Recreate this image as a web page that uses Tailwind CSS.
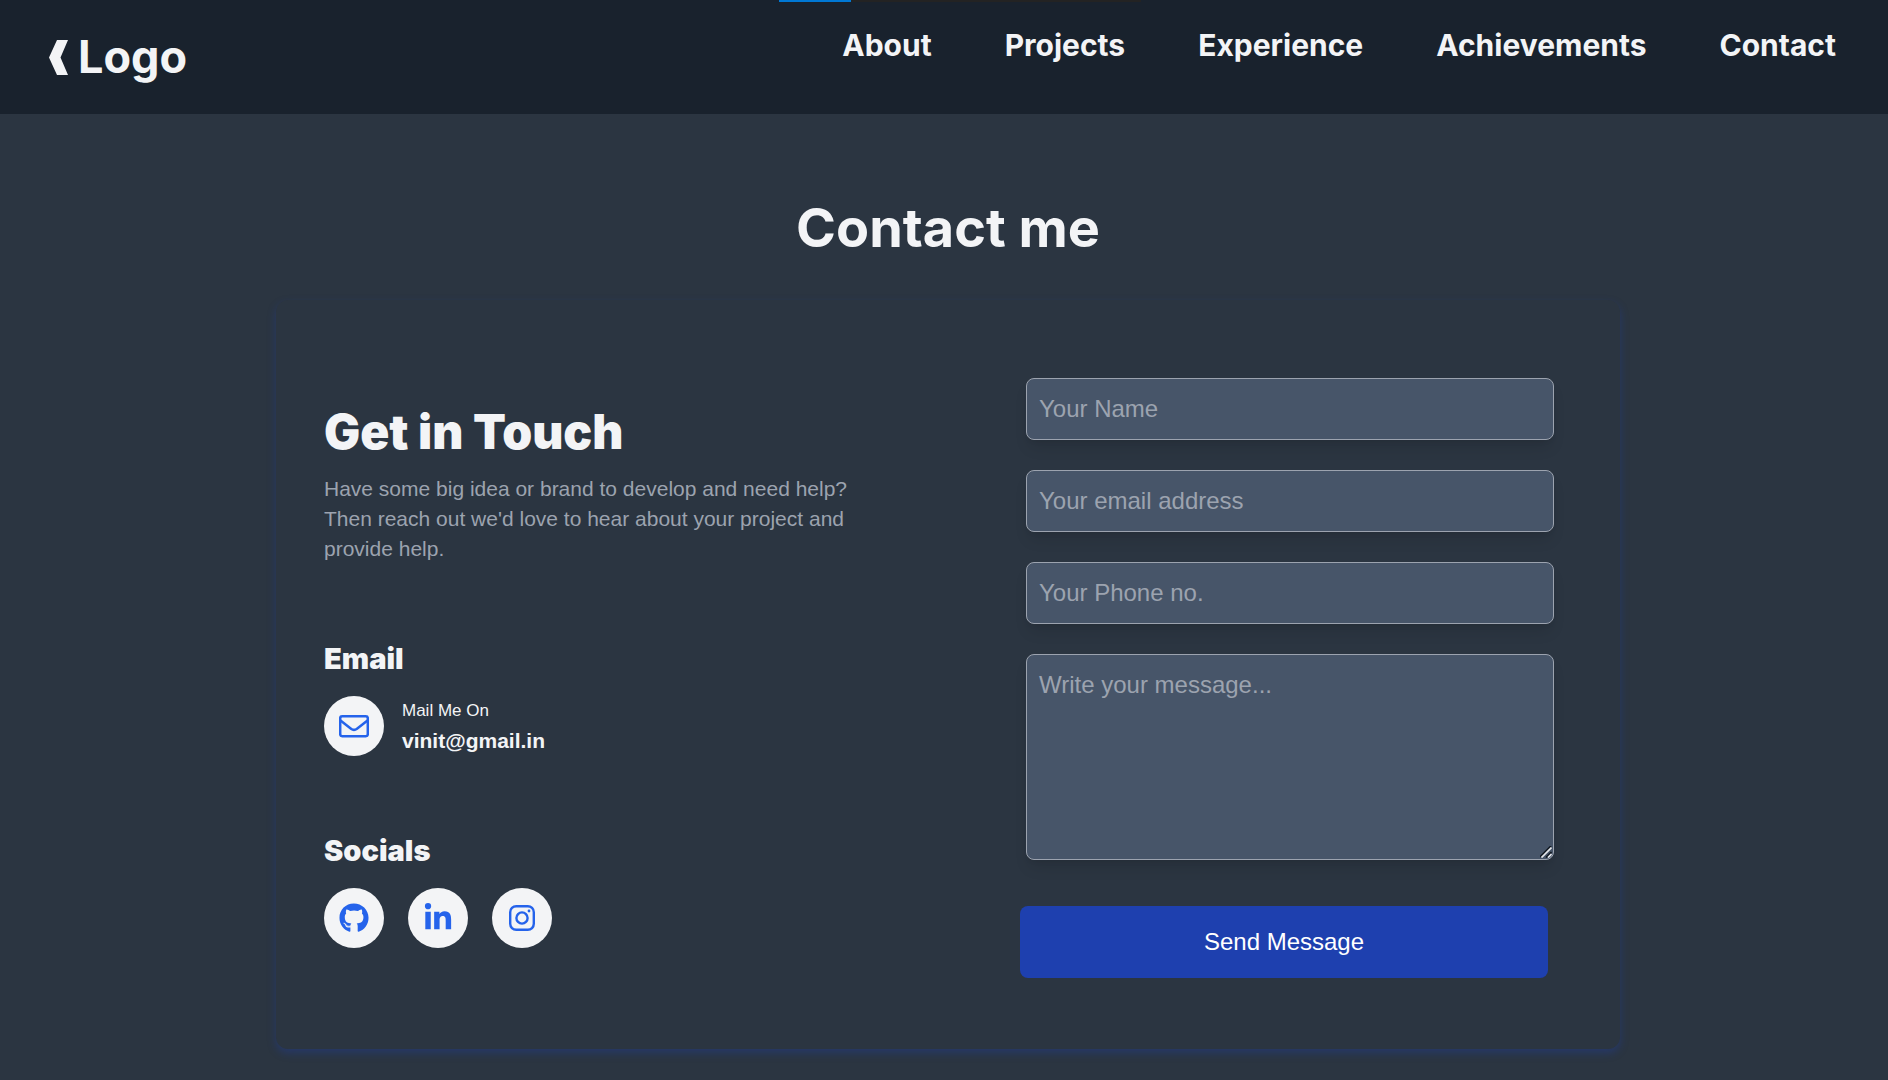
<!DOCTYPE html>
<html lang="en">
<head>
<meta charset="utf-8">
<meta name="viewport" content="width=device-width, initial-scale=1">
<title>Contact me</title>
<script src="https://cdn.jsdelivr.net/npm/@tailwindcss/browser@4"></script>
</head>
<body class="min-h-screen bg-[#2b3541] font-['Liberation_Sans',Arial,sans-serif] text-[#f3f4f6]">
  <!-- Page load indicator -->
  <div class="absolute top-0 left-[779px] flex h-[2px] w-[362px] bg-[#232323]"><div class="w-[72px] bg-[#0078d4]"></div></div>

  <header class="flex items-start justify-between bg-[#19222d] px-12 pb-6 font-[Inter,sans-serif] font-bold">
    <a href="#" class="flex items-center gap-[10px] pt-6 text-[45px] leading-[66px]">
      <svg class="h-[35px] w-5" viewBox="0 0 20 35" fill="currentColor" aria-hidden="true"><path d="M9 0H20L12.500 17.500L20 35H9L1 17.500Z"/></svg>
      <span>Logo</span>
    </a>
    <nav class="flex gap-[73px] pt-6 pr-1 text-[30px] leading-[42px]">
      <a href="#about">About</a>
      <a href="#projects">Projects</a>
      <a href="#experience">Experience</a>
      <a href="#achievements">Achievements</a>
      <a href="#contact">Contact</a>
    </nav>
  </header>

  <main id="contact" class="pt-20 pr-10 pb-8 pl-12">
    <h1 class="text-center font-[Inter,sans-serif] text-[54px] leading-[68px] font-bold">Contact me</h1>

    <section class="mx-auto mt-[38px] flex max-w-[1344px] justify-between rounded-xl py-[71px] pr-[66px] pl-12 shadow-[0_4px_8px_0_#1e40af59]">
      <div class="w-[540px] pt-[34px]">
        <h2 class="font-[Inter,sans-serif] text-[48px] leading-[53px] font-black">Get in Touch</h2>
        <p class="mt-4 text-[21px] leading-[30px] text-[#9ca3af]">Have some big idea or brand to develop and need help? Then reach out we'd love to hear about your project and provide help.</p>

        <h3 class="mt-[77px] font-[Inter,sans-serif] text-[29px] leading-[35px] font-black">Email</h3>
        <div class="mt-5 flex items-center gap-[18px]">
          <a href="mailto:vinit@gmail.in" aria-label="Send mail" class="flex size-15 items-center justify-center rounded-full bg-[#f3f4f6] text-[#2563eb]">
            <svg class="size-[30px]" viewBox="0 0 30 30" fill="none" stroke="currentColor" stroke-width="2.500" stroke-linejoin="round" aria-hidden="true"><rect x="1.200" y="5.200" width="27.600" height="20" rx="2"/><path d="M1.500 9.500L12 17.700Q15 20 18 17.700L28.500 9.500"/></svg>
          </a>
          <p class="leading-[30px]"><span class="block text-[17px]">Mail Me On</span><strong class="block text-[21px]">vinit@gmail.in</strong></p>
        </div>

        <h3 class="mt-[77px] font-[Inter,sans-serif] text-[29px] leading-[35px] font-black">Socials</h3>
        <div class="mt-5 flex gap-6">
          <a href="#" aria-label="GitHub" class="flex size-15 items-center justify-center rounded-full bg-[#f3f4f6] text-[#2563eb]">
            <svg class="size-[30px]" viewBox="0 0 496 512" fill="currentColor" aria-hidden="true"><path d="M165.900 397.400c0 2-2.300 3.600-5.200 3.600-3.300.3-5.600-1.300-5.600-3.600 0-2 2.300-3.600 5.200-3.600 3-.3 5.600 1.300 5.600 3.600zm-31.100-4.500c-.7 2 1.300 4.300 4.300 4.900 2.600 1 5.600 0 6.200-2s-1.300-4.300-4.300-5.200c-2.600-.7-5.500.3-6.200 2.300zm44.200-1.700c-2.900.7-4.900 2.600-4.600 4.900.3 2 2.900 3.300 5.900 2.600 2.900-.7 4.900-2.600 4.600-4.600-.3-1.900-3-3.200-5.900-2.900zM244.800 8C106.100 8 0 113.300 0 252c0 110.900 69.800 205.800 169.500 239.200 12.800 2.300 17.300-5.600 17.300-12.100 0-6.200-.3-40.400-.3-61.400 0 0-70 15-84.700-29.800 0 0-11.400-29.100-27.800-36.600 0 0-22.900-15.700 1.600-15.400 0 0 24.900 2 38.600 25.800 21.900 38.600 58.600 27.500 72.900 20.900 2.300-16 8.800-27.100 16-33.700-55.900-6.200-112.300-14.300-112.300-110.500 0-27.500 7.600-41.300 23.600-58.900-2.600-6.500-11.100-33.300 2.600-67.900 20.900-6.500 69 27 69 27 20-5.600 41.500-8.500 62.800-8.500s42.800 2.900 62.800 8.500c0 0 48.100-33.600 69-27 13.700 34.700 5.200 61.400 2.600 67.900 16 17.700 25.800 31.500 25.800 58.900 0 96.500-58.900 104.200-114.800 110.500 9.200 7.900 17 22.900 17 46.400 0 33.700-.3 75.400-.3 83.600 0 6.500 4.600 14.400 17.300 12.100C428.200 457.800 496 362.900 496 252 496 113.300 383.500 8 244.800 8zM97.200 352.900c-1.300 1-1 3.300.7 5.200 1.600 1.600 3.900 2.300 5.200 1 1.300-1 1-3.300-.7-5.200-1.600-1.600-3.900-2.300-5.200-1zm-10.800-8.100c-.7 1.300.3 2.900 2.300 3.900 1.600 1 3.600.7 4.300-.7.7-1.300-.3-2.900-2.300-3.900-2-.6-3.600-.3-4.300.7zm32.400 35.600c-1.600 1.300-1 4.300 1.300 6.200 2.300 2.300 5.200 2.600 6.500 1 1.300-1.300.7-4.300-1.300-6.200-2.200-2.300-5.200-2.600-6.500-1zm-11.400-14.700c-1.600 1-1.600 3.600 0 5.900 1.600 2.300 4.300 3.300 5.600 2.300 1.600-1.300 1.600-3.900 0-6.200-1.400-2.300-4-3.300-5.600-2z"/></svg>
          </a>
          <a href="#" aria-label="LinkedIn" class="flex size-15 items-center justify-center rounded-full bg-[#f3f4f6] text-[#2563eb]">
            <svg class="size-[30px]" viewBox="0 0 448 512" fill="currentColor" aria-hidden="true"><path d="M100.280 448H7.400V148.900h92.880zM53.790 108.100C24.090 108.100 0 83.500 0 53.800a53.790 53.790 0 0 1 107.580 0c0 29.700-24.100 54.300-53.790 54.300zM447.900 448h-92.680V302.400c0-34.700-.7-79.200-48.290-79.200-48.290 0-55.690 37.700-55.690 76.700V448h-92.780V148.900h89.080v40.800h1.300c12.400-23.500 42.690-48.300 87.880-48.300 94 0 111.280 61.900 111.280 142.300V448z"/></svg>
          </a>
          <a href="#" aria-label="Instagram" class="flex size-15 items-center justify-center rounded-full bg-[#f3f4f6] text-[#2563eb]">
            <svg class="size-[30px]" viewBox="0 0 30 30" fill="none" stroke="currentColor" stroke-width="2.400" aria-hidden="true"><rect x="3.200" y="3.200" width="23.600" height="23.600" rx="6"/><circle cx="15" cy="15" r="5.600"/><circle cx="22" cy="8" r="1.400" fill="currentColor" stroke="none"/></svg>
          </a>
        </div>
      </div>

      <form class="flex w-[528px] flex-col gap-[30px] pt-[7px] text-[24px]">
        <input aria-label="Your Name" type="text" placeholder="Your Name" class="h-[62px] rounded-lg border border-[#9ca3af] bg-[#475569] px-3 shadow-lg placeholder:text-[#9ca3af]">
        <input aria-label="Your email address" type="email" placeholder="Your email address" class="h-[62px] rounded-lg border border-[#9ca3af] bg-[#475569] px-3 shadow-lg placeholder:text-[#9ca3af]">
        <input aria-label="Your Phone no." type="tel" placeholder="Your Phone no." class="h-[62px] rounded-lg border border-[#9ca3af] bg-[#475569] px-3 shadow-lg placeholder:text-[#9ca3af]">
        <div class="relative flex">
          <textarea aria-label="Your message" rows="5" placeholder="Write your message..." class="w-full resize-none rounded-lg border border-[#9ca3af] bg-[#475569] p-3 leading-9 shadow-lg placeholder:text-[#9ca3af]"></textarea>
          <!-- Resize grip -->
          <svg class="pointer-events-none absolute right-[2px] bottom-[2px] size-3" viewBox="0 0 12 12" fill="none" stroke-width="1.700" aria-hidden="true"><path d="M0 11L11 0M6 11.500L11.500 6" stroke="#111820"/><path d="M1.500 11.500L11.500 1.500M8 11.500L11.500 8" stroke="#e5e7eb"/></svg>
        </div>
        <button type="submit" class="mt-4 -ml-[6px] h-18 w-full rounded-lg bg-[#1e40af] text-white">Send Message</button>
      </form>
    </section>
  </main>
</body>
</html>
